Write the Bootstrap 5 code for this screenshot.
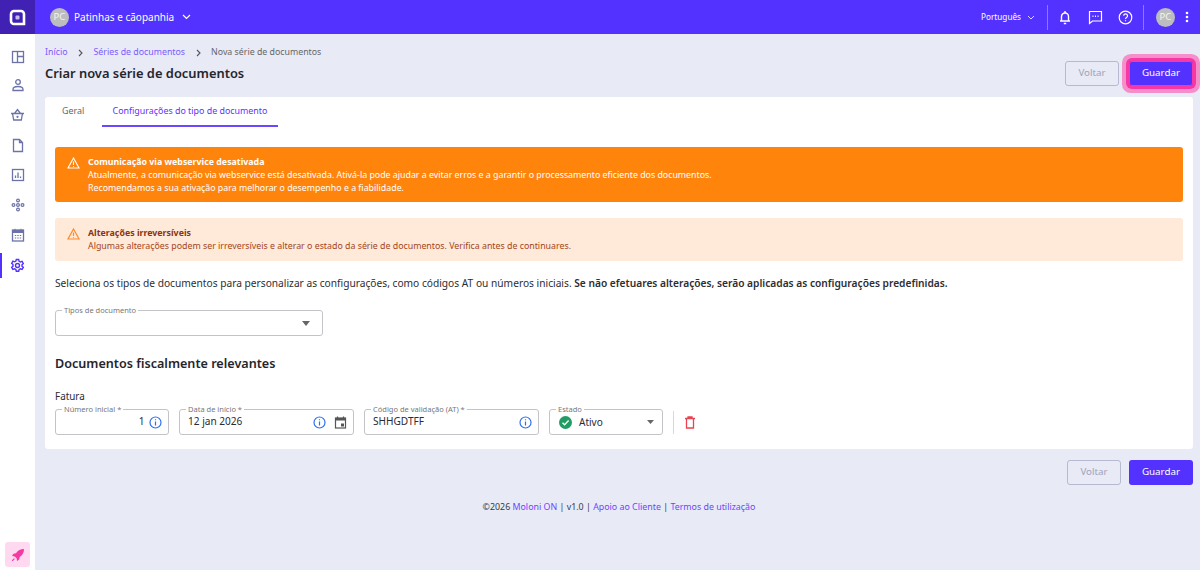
<!DOCTYPE html>
<html lang="pt">
  <head>
    <title>Criar nova série de documentos - Moloni ON</title>
    <link href="https://cdn.jsdelivr.net/npm/bootstrap@5.3.0/dist/css/bootstrap.min.css" rel="stylesheet">
    <style>
      html, body { height: 570px; overflow: hidden; }
      body { background: #e8eaf6; font-family: "Noto Sans", sans-serif; font-size: 12px; color: #2b2b33; }
      a { color: #5b34ff; text-decoration: none; }

      /* barra de topo */
      .top-bar { height: 34px; background: #5331ff; color: #fff; }
      .brand-box { width: 35px; height: 34px; background: #4121b4; }
      .avatar-pc { background: #bdbdbd; color: rgba(255,255,255,.85); border-radius: 50%; width: 19px; height: 19px; font-size: 9.5px; }
      .org-name { font-size: 10px; margin-left: 5px; margin-right: 8px; }
      .org-block { margin-left: 15px; }
      .lang-name { font-size: 8.2px; margin-right: 6px; }
      .top-sep { width: 1px; height: 25px; background: rgba(255,255,255,.35); }
      .top-right { padding-right: 11px; }
      .gap-sep1 { margin-left: 12px; }
      .gap-bell { margin-left: 10px; }
      .gap-chat { margin-left: 16px; }
      .gap-help { margin-left: 15px; }
      .gap-sep2 { margin-left: 10px; }
      .gap-avatar { margin-left: 12px; }
      .gap-dots { margin-left: 10px; }

      /* menu lateral */
      .side-menu { width: 35px; height: 536px; background: #fff; padding-top: 6px; }
      .side-item { height: 30px; width: 35px; position: relative; }
      .side-first svg { margin-top: 4px; }
      .side-active::before { content: ""; position: absolute; left: 0; top: 3px; width: 2px; height: 25px; background: #5331ff; }
      .side-rocket { width: 25px; height: 25px; background: #ffd9f0; border-radius: 3px; margin: auto 0 3px 5px; }

      /* conteudo */
      .main-area { width: 1165px; padding: 11px 7px 0 10px; }
      .crumbs { font-size: 8.8px; height: 13px; padding-top: 2px; color: #666; }
      .crumbs a { color: #7a5cff; }
      .crumb-sep { margin: 0 10.5px; }
      .page-title { font-size: 12.9px; font-weight: 600; margin: 0; color: #25252b; }
      .title-row { margin-top: 2px; height: 27px; }
      .btn-back, .btn-back:disabled { width: 54px; height: 25px; padding: 0; font-size: 9.8px; color: #9fa3bb; border: 1px solid #b6b9cf; border-radius: 3px; background: transparent; opacity: 1; }
      .btn-save { width: 64px; height: 25px; padding: 0; font-size: 9.8px; color: #fff; background: #5331ff; border: 0; border-radius: 3px; }
      .btn-save:hover { color: #fff; background: #5331ff; }
      .save-glow { margin-left: 10px; box-shadow: inset 0 0 0 1px #f637a4, 0 0 0 3px #f637a4, 0 0 0 7px #f48fcb; }

      .main-card { height: 352px; margin-top: 10px; background: #fff; border-radius: 3px; padding: 0 10px; }
      .tab-row { height: 30px; }
      .tab-link { font-size: 8.9px; height: 30px; padding: 7px 0 0; color: #666; }
      .tab-geral { padding-left: 7px; width: 47px; }
      .tab-conf { color: #5b34ff; width: 176px; text-align: center; border-bottom: 2px solid #6a48ff; }

      .note-box { border-radius: 3px; font-size: 8.82px; line-height: 13px; padding-left: 12px; }
      .note-icon { flex: none; margin-right: 8px; margin-top: 1px; }
      .note-title { font-weight: 700; }
      .note-strong { height: 55px; margin-top: 20px; padding-top: 9px; background: #ff840c; color: #fff; }
      .note-soft { height: 43px; margin-top: 16px; padding-top: 9px; background: #ffe9d9; color: #a3461a; }
      .note-soft .note-title { color: #8a3410; }

      .intro-text { font-size: 10.2px; margin: 14px 0 0; line-height: 16px; color: #2d2d33; }
      .intro-text b { font-weight: 600; }

      .float-field { position: relative; height: 26px; border: 1px solid #c4c4c8; border-radius: 3px; }
      .float-label { position: absolute; top: -6px; left: 6px; padding: 0 2px; background: #fff; font-size: 7.5px; line-height: 10px; color: #777; white-space: nowrap; }
      .type-field { width: 268px; margin-top: 19px; padding-right: 12px; }
      .section-title { font-size: 12.6px; font-weight: 600; margin: 19px 0 0; color: #25252b; line-height: 18px; }
      .invoice-name { font-size: 9.9px; margin-top: 17px; line-height: 13px; }
      .field-row { margin-top: 6px; gap: 10px; }
      .field-row .float-field { font-size: 10.1px; padding: 0 6.5px 0 8px; }
      .fld-num { width: 114px; }
      .fld-date { width: 175px; }
      .fld-code { width: 175px; }
      .field-row .fld-state { width: 114px; padding: 0 8px 0 9px; font-size: 10px; }
      .state-dot { margin-right: 7px; }
      .row-sep { width: 1px; height: 23px; background: #d8d8de; }

      .bottom-btns { margin-top: 11px; }
      .page-foot { font-size: 8.85px; margin-top: 16px; color: #3a3a42; }
      .page-foot a { color: #6a48ff; }
    </style>
  </head>
  <body>
    <!-- Barra de topo -->
    <div class="top-bar d-flex align-items-center">
      <div class="brand-box d-flex align-items-center justify-content-center">
        <svg width="17" height="17" viewBox="0 0 17 17"><path d="M5 2h7a3 3 0 0 1 3 3v10h-10a3 3 0 0 1-3-3v-7a3 3 0 0 1 3-3z" fill="none" stroke="#fff" stroke-width="2.600"/><rect x="6.500" y="6.500" width="4" height="4" rx="1" fill="#fff" fill-opacity=".7"/></svg>
      </div>
      <div class="org-block d-flex align-items-center">
        <span class="avatar-pc d-flex align-items-center justify-content-center">PC</span>
        <span class="org-name">Patinhas e cãopanhia</span>
        <svg width="9" height="6" viewBox="0 0 9 6"><path d="M1 1l3.500 3.500L8 1" fill="none" stroke="#fff" stroke-width="1.200"/></svg>
      </div>
      <div class="top-right ms-auto d-flex align-items-center">
        <span class="lang-name">Português</span>
        <svg width="8" height="5" viewBox="0 0 8 5"><path d="M1 1l3 3 3-3" fill="none" stroke="#dcd5ff" stroke-width="1"/></svg>
        <span class="top-sep gap-sep1"></span>
        <svg class="gap-bell" width="14" height="15" viewBox="0 0 14 15" fill="none" stroke="#fff" stroke-width="1.400"><path d="M3.500 11V6.500a3.500 3.500 0 0 1 7 0V11zM2 11h10"/><path d="M5.800 13.500h2.400M7 1v2"/></svg>
        <svg class="gap-chat" width="15" height="15" viewBox="0 0 15 15" fill="none" stroke="#fff" stroke-width="1.200"><path d="M1.500 1.500h12v9.500H4.500l-3 2.500z"/><path d="M4.500 6.200h1M7 6.200h1M9.500 6.200h1" stroke-width="1.400"/></svg>
        <svg class="gap-help" width="15" height="15" viewBox="0 0 15 15" fill="none" stroke="#fff" stroke-width="1.200"><circle cx="7.500" cy="7.500" r="6.300"/><path d="M5.700 5.800a1.900 1.900 0 1 1 2.800 1.700c-.7.400-1 .8-1 1.500"/><path d="M7.500 10.200v1.100"/></svg>
        <span class="top-sep gap-sep2"></span>
        <span class="avatar-pc d-flex align-items-center justify-content-center gap-avatar">PC</span>
        <svg class="gap-dots" width="4" height="12" viewBox="0 0 4 12" fill="#fff"><circle cx="2" cy="2" r="1.300"/><circle cx="2" cy="6" r="1.300"/><circle cx="2" cy="10" r="1.300"/></svg>
      </div>
    </div>

    <div class="d-flex">
      <!-- Menu lateral -->
      <nav class="side-menu d-flex flex-column">
        <div class="side-item side-first d-flex align-items-center justify-content-center"><svg width="14" height="14" viewBox="0 0 14 14" fill="none" stroke="#6b73a8" stroke-width="1.300"><rect x="1.500" y="1.500" width="11" height="11"/><path d="M6.500 1.500v11M6.500 6.500h6"/></svg></div>
        <div class="side-item d-flex align-items-center justify-content-center"><svg width="14" height="14" viewBox="0 0 14 14" fill="none" stroke="#6b73a8" stroke-width="1.300"><circle cx="7" cy="4" r="2.300"/><path d="M2 11.500c0-2 2-3 5-3s5 1 5 3v1H2z"/></svg></div>
        <div class="side-item d-flex align-items-center justify-content-center"><svg width="15" height="14" viewBox="0 0 15 14" fill="none" stroke="#6b73a8" stroke-width="1.300"><path d="M1 5.500h13M2.500 5.500l1.200 6.500h7.600l1.200-6.500M4.500 5.500L7.500 1.500l3 4"/><circle cx="7.500" cy="8.800" r=".5"/></svg></div>
        <div class="side-item d-flex align-items-center justify-content-center"><svg width="14" height="15" viewBox="0 0 14 15" fill="none" stroke="#6b73a8" stroke-width="1.300"><path d="M2.500 1.500h6l3 3v9h-9zM8.500 1.500v3h3"/></svg></div>
        <div class="side-item d-flex align-items-center justify-content-center"><svg width="14" height="14" viewBox="0 0 14 14" fill="none" stroke="#6b73a8" stroke-width="1.300"><rect x="1.500" y="1.500" width="11" height="11"/><path d="M4.500 10V7.500M7 10V4.500M9.500 10V8.500"/></svg></div>
        <div class="side-item d-flex align-items-center justify-content-center"><svg width="14" height="14" viewBox="0 0 14 14" fill="none" stroke="#6b73a8" stroke-width="1.200"><circle cx="7" cy="2.500" r="1.400"/><circle cx="2.500" cy="7" r="1.400"/><circle cx="7" cy="7" r="1.400"/><circle cx="11.500" cy="7" r="1.400"/><circle cx="7" cy="11.500" r="1.400"/></svg></div>
        <div class="side-item d-flex align-items-center justify-content-center"><svg width="14" height="14" viewBox="0 0 14 14"><rect x="1.500" y="2" width="11" height="11" fill="none" stroke="#6b73a8" stroke-width="1.300"/><rect x="1.500" y="2" width="11" height="3" fill="#6b73a8"/><path d="M4 .8v2M10 .8v2M3.800 7.500h1.400M6.300 7.500h1.400M8.800 7.500h1.400M3.800 10h1.400M6.300 10h1.400M8.800 10h1.400" stroke="#6b73a8"/></svg></div>
        <div class="side-item side-active d-flex align-items-center justify-content-center"><svg width="15" height="15" viewBox="0 0 15 15" fill="none" stroke="#5331ff" stroke-width="1.400"><path d="M6.300 1.500h2.400l.4 1.800 1.300.7 1.700-.6 1.200 2.100-1.300 1.200v1.400l1.300 1.200-1.200 2.100-1.700-.6-1.300.7-.4 1.800H6.300l-.4-1.800-1.300-.7-1.700.6-1.200-2.100 1.300-1.200V6.500L1.700 5.300l1.200-2.100 1.700.6 1.300-.7z"/><circle cx="7.500" cy="7.500" r="2"/></svg></div>
        <div class="side-rocket mt-auto d-flex align-items-center justify-content-center"><svg width="14" height="14" viewBox="0 0 14 14" fill="#f637a4"><path d="M13 1c-3.500 0-6 1.300-8 4.300L2.500 5.800 1 8l2.800.4 1.800 1.800L6 13l2.200-1.500.5-2.500C11.700 7 13 4.500 13 1z"/><path d="M3 10.200l.8.800-2 2H1v-.8z"/></svg></div>
      </nav>

      <!-- Conteudo -->
      <main class="main-area">
        <div class="crumbs d-flex align-items-center">
          <a href="#">Início</a>
          <svg class="crumb-sep" width="5" height="8" viewBox="0 0 5 8"><path d="M1 1l3 3-3 3" fill="none" stroke="#555" stroke-width="1.100"/></svg>
          <a href="#">Séries de documentos</a>
          <svg class="crumb-sep" width="5" height="8" viewBox="0 0 5 8"><path d="M1 1l3 3-3 3" fill="none" stroke="#555" stroke-width="1.100"/></svg>
          <span>Nova série de documentos</span>
        </div>
        <div class="title-row d-flex align-items-center justify-content-between">
          <h1 class="page-title">Criar nova série de documentos</h1>
          <div class="d-flex">
            <button class="btn btn-back" disabled>Voltar</button>
            <button class="btn btn-save save-glow">Guardar</button>
          </div>
        </div>

        <div class="main-card">
          <div class="tab-row d-flex">
            <a class="tab-link tab-geral" href="#">Geral</a>
            <a class="tab-link tab-conf" href="#">Configurações do tipo de documento</a>
          </div>

          <div class="note-box note-strong d-flex">
            <svg class="note-icon" width="13" height="12" viewBox="0 0 13 12"><path d="M6.500 1L1 11h11z M6.500 4.500v3.500M6.500 9v.8" fill="none" stroke="#fff" stroke-width="1.100"/></svg>
            <div>
              <div class="note-title">Comunicação via webservice desativada</div>
              <div>Atualmente, a comunicação via webservice está desativada. Ativá-la pode ajudar a evitar erros e a garantir o processamento eficiente dos documentos.</div>
              <div>Recomendamos a sua ativação para melhorar o desempenho e a fiabilidade.</div>
            </div>
          </div>

          <div class="note-box note-soft d-flex">
            <svg class="note-icon" width="13" height="12" viewBox="0 0 13 12"><path d="M6.500 1L1 11h11z M6.500 4.500v3.500M6.500 9v.8" fill="none" stroke="#ff8a2b" stroke-width="1.200"/></svg>
            <div>
              <div class="note-title">Alterações irreversíveis</div>
              <div>Algumas alterações podem ser irreversíveis e alterar o estado da série de documentos. Verifica antes de continuares.</div>
            </div>
          </div>

          <p class="intro-text">Seleciona os tipos de documentos para personalizar as configurações, como códigos AT ou números iniciais. <b>Se não efetuares alterações, serão aplicadas as configurações predefinidas.</b></p>

          <div class="float-field type-field d-flex align-items-center justify-content-end">
            <span class="float-label">Tipos de documento</span>
            <svg width="8" height="5" viewBox="0 0 8 5"><path d="M0 0h8L4 5z" fill="#666"/></svg>
          </div>

          <h2 class="section-title">Documentos fiscalmente relevantes</h2>
          <div class="invoice-name">Fatura</div>

          <div class="field-row d-flex align-items-center">
            <div class="float-field fld-num d-flex align-items-center justify-content-end">
              <span class="float-label">Número inicial *</span>
              <span class="me-1">1</span>
              <svg width="13" height="13" viewBox="0 0 13 13" fill="none" stroke="#2f6fed" stroke-width="1.200"><circle cx="6.500" cy="6.500" r="5.500"/><path d="M6.500 5.500v4M6.500 3.300v1"/></svg>
            </div>
            <div class="float-field fld-date d-flex align-items-center">
              <span class="float-label">Data de início *</span>
              <span class="me-auto">12 jan 2026</span>
              <svg width="13" height="13" viewBox="0 0 13 13" fill="none" stroke="#2f6fed" stroke-width="1.200"><circle cx="6.500" cy="6.500" r="5.500"/><path d="M6.500 5.500v4M6.500 3.300v1"/></svg>
              <svg class="ms-2" width="13" height="13" viewBox="0 0 13 13"><path d="M3.500.5v2M9.500.5v2" stroke="#555" stroke-width="1.200"/><rect x="1.500" y="2" width="10" height="10" fill="none" stroke="#555" stroke-width="1.200"/><rect x="1.500" y="2" width="10" height="2.500" fill="#555"/><rect x="7" y="7.500" width="3" height="3" fill="#555"/></svg>
            </div>
            <div class="float-field fld-code d-flex align-items-center">
              <span class="float-label">Código de validação (AT) *</span>
              <span class="me-auto">SHHGDTFF</span>
              <svg width="13" height="13" viewBox="0 0 13 13" fill="none" stroke="#2f6fed" stroke-width="1.200"><circle cx="6.500" cy="6.500" r="5.500"/><path d="M6.500 5.500v4M6.500 3.300v1"/></svg>
            </div>
            <div class="float-field fld-state d-flex align-items-center">
              <span class="float-label">Estado</span>
              <svg class="state-dot" width="13" height="13" viewBox="0 0 13 13"><circle cx="6.500" cy="6.500" r="6.500" fill="#1f9d63"/><path d="M3.500 6.700l2.100 2.100 4-4.200" fill="none" stroke="#fff" stroke-width="1.400"/></svg>
              <span class="me-auto">Ativo</span>
              <svg width="7" height="4" viewBox="0 0 7 4"><path d="M0 0h7L3.500 4z" fill="#666"/></svg>
            </div>
            <span class="row-sep"></span>
            <svg width="12" height="13" viewBox="0 0 12 13" fill="none" stroke="#e8434f" stroke-width="1.300"><path d="M1 2.500h10M4 2.500V1h4v1.500M2.500 2.500v9.500h7V2.500"/></svg>
          </div>
        </div>

        <div class="bottom-btns d-flex justify-content-end">
          <button class="btn btn-back" disabled>Voltar</button>
          <button class="btn btn-save ms-2">Guardar</button>
        </div>

        <footer class="page-foot text-center">©2026 <a href="#">Moloni ON</a> | v1.0 | <a href="#">Apoio ao Cliente</a> | <a href="#">Termos de utilização</a></footer>
      </main>
    </div>

    <script src="https://cdn.jsdelivr.net/npm/bootstrap@5.3.0/dist/js/bootstrap.bundle.min.js"></script>
  </body>
</html>
